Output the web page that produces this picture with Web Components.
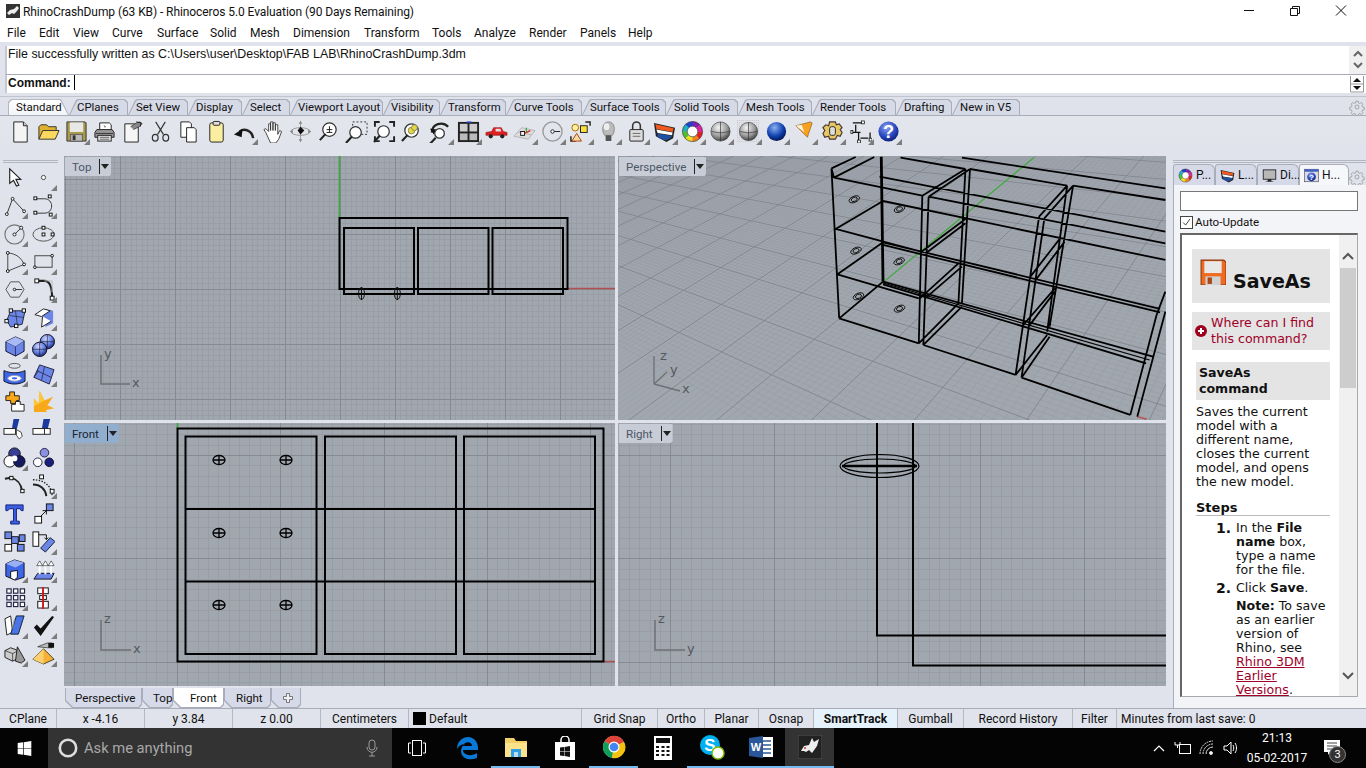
<!doctype html>
<html>
<head>
<meta charset="utf-8">
<title>Rhinoceros 5.0</title>
<style>
  html, body { margin: 0; padding: 0; background: #e0e3eb; }
  body { width: 1366px; height: 768px; overflow: hidden; display: flex; flex-direction: column; font: 12px Roboto, sans-serif; color: #111; }
</style>
</head>
<body>
<title-bar></title-bar>
<menu-bar>
  <menu-item w="32">File</menu-item><menu-item w="34">Edit</menu-item><menu-item w="39">View</menu-item><menu-item w="45">Curve</menu-item><menu-item w="53">Surface</menu-item><menu-item w="40">Solid</menu-item><menu-item w="43">Mesh</menu-item><menu-item w="71">Dimension</menu-item><menu-item w="68">Transform</menu-item><menu-item w="42">Tools</menu-item><menu-item w="55">Analyze</menu-item><menu-item w="51">Render</menu-item><menu-item w="48">Panels</menu-item><menu-item w="40">Help</menu-item>
</menu-bar>
<command-area></command-area>
<tool-tabs>
  <tool-tab w="61" active>Standard</tool-tab><tool-tab w="59">CPlanes</tool-tab><tool-tab w="60">Set View</tool-tab><tool-tab w="54">Display</tool-tab><tool-tab w="48">Select</tool-tab><tool-tab w="93">Viewport Layout</tool-tab><tool-tab w="57">Visibility</tool-tab><tool-tab w="66">Transform</tool-tab><tool-tab w="76">Curve Tools</tool-tab><tool-tab w="84">Surface Tools</tool-tab><tool-tab w="72">Solid Tools</tool-tab><tool-tab w="74">Mesh Tools</tool-tab><tool-tab w="84">Render Tools</tool-tab><tool-tab w="56">Drafting</tool-tab><tool-tab w="68">New in V5</tool-tab>
</tool-tabs>
<top-toolbar></top-toolbar>
<main-area>
  <left-toolbar slot="left"></left-toolbar>
  <view-port label="Top" view="top" box="64 156 551 264"></view-port>
  <view-port label="Perspective" view="persp" box="618 156 548 264"></view-port>
  <view-port label="Front" view="front" box="64 423 551 263" active></view-port>
  <view-port label="Right" view="right" box="618 423 548 263"></view-port>
  <view-tabs slot="tabs">
    <view-tab w="77" p="10">Perspective</view-tab><view-tab w="31" p="11">Top</view-tab><view-tab w="51" p="17" active>Front</view-tab><view-tab w="47" p="12">Right</view-tab><view-tab w="30" p="12" plus></view-tab>
  </view-tabs>
  <help-panel slot="right">
    <help-title>SaveAs</help-title>
    <help-where>Where can I find<br>this command?</help-where>
    <help-head>SaveAs<br>command</help-head>
    <help-text>Saves the current<br>model with a<br>different name,<br>closes the current<br>model, and opens<br>the new model.</help-text>
    <help-steps></help-steps>
  </help-panel>
</main-area>
<status-bar>
  <status-cell w="57">CPlane</status-cell><status-cell w="88">x -4.16</status-cell><status-cell w="88">y 3.84</status-cell><status-cell w="88">z 0.00</status-cell><status-cell w="88">Centimeters</status-cell><status-cell w="173" layer>Default</status-cell><status-cell w="76">Grid Snap</status-cell><status-cell w="47">Ortho</status-cell><status-cell w="54">Planar</status-cell><status-cell w="55">Osnap</status-cell><status-cell w="84" on>SmartTrack</status-cell><status-cell w="66">Gumball</status-cell><status-cell w="109">Record History</status-cell><status-cell w="44">Filter</status-cell><status-cell w="249" plain>Minutes from last save: 0</status-cell>
</status-bar>
<task-bar></task-bar>

<script>
const UI = 'Roboto, "Open Sans", sans-serif'

// base class: every element renders css + html into an open shadow root
class Part extends HTMLElement {
  connectedCallback() {
    if (this.shadowRoot) return
    this.attachShadow({ mode: 'open' })
    this.shadowRoot.innerHTML = `<style>${this.css()}</style>${this.html()}`
  }
  css() { return '' }
  html() { return '<slot></slot>' }
}
const def = (name, css, html) => customElements.define(name, class extends Part {
  css() { return typeof css === 'function' ? css(this) : css }
  html() { return html ? html(this) : '<slot></slot>' }
})

// colour wheel, no conic gradient in svg so it is made of arcs
const wheel = (cx, cy, r, sw) => {
  const cols = ['#e02020', '#f08020', '#f0e020', '#50c030', '#20b0c0', '#2040d0', '#8020b0', '#e020a0']
  const c = 2 * Math.PI * r, part = c / cols.length
  return cols.map((col, i) => `<circle cx="${cx}" cy="${cy}" r="${r}" fill="none" stroke="${col}" stroke-width="${sw}" stroke-dasharray="${part + .4} ${c - part - .4}" stroke-dashoffset="${-part * i}"/>`).join('')
}
const sphere = (a, b, c) => `<defs><radialGradient id="s" cx=".4" cy=".3" r=".75"><stop offset="0" stop-color="${a}"/><stop offset=".6" stop-color="${b}"/><stop offset="1" stop-color="${c}"/></radialGradient></defs>`
const lens = (x = 10, y = 10, r = 6) => `<circle cx="${x + 4}" cy="${y - 1}" r="${r}" fill="#fff" stroke="#333" stroke-width="1.3"/><path d="M${x}  ${y + 3.5}L${x - 6} ${y + 10}" stroke="#222" stroke-width="2.2"/>`
const BL = '#6c86e8'

const icons = {
  new: `<path d="M5 2h10l4 4v17H5z" fill="#f4f4f4" stroke="#222"/><path d="M15 2v4h4" fill="#ccc" stroke="#222"/>`,
  open: `<path d="M2 20V7l2-2h6l2 2h8v4" fill="#e0b030" stroke="#333"/><path d="M2 20l4-9h17l-4 9z" fill="#fbd860" stroke="#333"/>`,
  save: `<path d="M2 2h19l1 1v19H2z" fill="#a89a4c" stroke="#333"/><rect x="5" y="2.500" width="14" height="10" fill="#e8e8e8"/><rect x="6" y="15" width="12" height="7" fill="#bbb" stroke="#444" stroke-width=".7"/><rect x="8" y="16" width="3" height="5" fill="#333"/>`,
  print: `<path d="M7 10V3h10l2 2v5" fill="#fff" stroke="#222"/><path d="M11 5l3 2-2 1z" fill="#888"/><path d="M2 18v-5l2-3h16l2 3v5z" fill="#999" stroke="#222"/><path d="M3 14h18" stroke="#333"/><rect x="5" y="16" width="14" height="6" fill="#eee" stroke="#222"/><path d="M7 18h10M7 20h10" stroke="#333" stroke-width=".8"/>`,
  saveas: `<path d="M4 4h10l4 3v16H4z" fill="#f6f6f6" stroke="#222"/><path d="M10 7l6-4 4-1 2 2-3 3-6 3" fill="#888" stroke="#333" stroke-width=".8"/><path d="M16 2l5 1-1 4" fill="none" stroke="#222"/>`,
  cut: `<path d="M7 2l8 13M17 2L9 15" stroke="#333" stroke-width="1.2" fill="none"/><ellipse cx="6.500" cy="18.500" rx="3" ry="3.500" fill="none" stroke="#333" stroke-width="1.3"/><ellipse cx="17.500" cy="18.500" rx="3" ry="3.500" fill="none" stroke="#333" stroke-width="1.3"/>`,
  copy: `<path d="M4 2h9l2 2v14H4z" fill="#fff" stroke="#222"/><path d="M10 8h8l2 2v13H10z" fill="#fff" stroke="#222"/>`,
  paste: `<rect x="5" y="3" width="14" height="20" rx="2" fill="#faeea0" stroke="#222"/><rect x="8.500" y="1.500" width="7" height="4" rx="1" fill="#ddd" stroke="#222"/>`,
  undo: `<path d="M21 19C20 11 12 8 7 12" fill="none" stroke="#222" stroke-width="2.600"/><path d="M1 15l9-6-1 9z" fill="#111"/>`,
  hand: `<path d="M5 13l-2-3 2-1 3 3V4h2v7-9h2.500v9-8H15v8-6h2.500v10l2-4 2 1-3 8-3 4H10z" fill="#fff" stroke="#333" stroke-width=".9"/>`,
  orbit: `<ellipse cx="12" cy="12" rx="10" ry="4" fill="none" stroke="#999"/><path d="M12 1v22" stroke="#999"/><path d="M12 7l4 4-4 4-3-4z" fill="#111"/><path d="M12 1l-2 3h4zM12 23l-2-3h4zM1 12l3-2v4zM23 12l-3-2v4z" fill="#888"/>`,
  zoomin: lens(9, 11, 7) + `<path d="M10 10h6M13 6.500v6.500M10 13h6" stroke="#222" stroke-width="1"/>`,
  zoomwin: `<rect x="8" y="2" width="15" height="13" fill="none" stroke="#333" stroke-dasharray="2 2"/>` + lens(7, 14, 6),
  zoomext: `<path d="M2 7V2h5M17 2h5v5M22 17v5h-5M7 22H2v-5" fill="none" stroke="#222" stroke-width="2"/>` + lens(7, 13, 6),
  zoomsel: lens(7, 12, 7) + `<circle cx="11" cy="11" r="3.500" fill="#e8d840" stroke="#886"/><circle cx="14" cy="8" r="3" fill="#e8d840" stroke="#886"/>`,
  rotzoom: `<path d="M3 13C3 4 14 1 20 7" fill="none" stroke="#222" stroke-width="2.400"/><path d="M1 9l4 6 3-5z" fill="#111"/>` + lens(7, 15, 5),
  four: `<rect x="1" y="2" width="22" height="21" fill="#222"/><rect x="3" y="4" width="8" height="8" fill="#ccc"/><rect x="13" y="4" width="8" height="8" fill="#ccc"/><rect x="3" y="14" width="8" height="7" fill="#bbb"/><rect x="13" y="14" width="8" height="7" fill="#bbb"/><rect x="10" y="1.500" width="5" height="1.500" fill="#24c"/>`,
  car: `<path d="M1 16v-3l6-1 2-4h8l2 4 4 1v3z" fill="#e02020" stroke="#901010" stroke-width=".6"/><circle cx="6" cy="17" r="2.200" fill="#222"/><circle cx="18" cy="17" r="2.200" fill="#222"/><path d="M11 9h5l1 3h-6z" fill="#ddd"/>`,
  grid: `<path d="M1 17L9 8l14 3-7 9zM5 12.500l14 3M9.500 15L14 9" fill="#ddd" stroke="#aaa" stroke-width=".8"/><rect x="8" y="12" width="4" height="4" fill="#fff" stroke="#111"/><path d="M12 14l6-3" stroke="#d22" stroke-width="1.400"/><path d="M14 8v5" stroke="#2a2" stroke-width="1"/>`,
  circle: `<circle cx="12" cy="12" r="10" fill="none" stroke="#999" stroke-width="1.400"/><path d="M12 12h8" stroke="#222"/><circle cx="12" cy="12" r="1.800" fill="#fff" stroke="#222"/>`,
  pts: `<path d="M17 2h5v4M2 17v5h5" fill="none" stroke="#222" stroke-width="1.500"/><rect x="12" y="6" width="7" height="7" fill="#fbe03c" stroke="#222"/><circle cx="6.500" cy="8" r="3.500" fill="#fff0a0" stroke="#a60"/><path d="M8 14l5 8H3z" fill="#f8d8a8" stroke="#a40"/>`,
  bulb: `<path d="M8 16C4 10 6 2 12 2s8 8 4 14z" fill="#bbb" stroke="#888"/><ellipse cx="10" cy="7" rx="3" ry="3.500" fill="#eee"/><rect x="9" y="16" width="6" height="6" rx="1" fill="#555"/>`,
  lock: `<path d="M8 11V6a4 4 0 0 1 8 0v5" fill="none" stroke="#333" stroke-width="1.600"/><rect x="5" y="10" width="14" height="12" rx="1" fill="#ddd" stroke="#222"/><path d="M8 14h8M8 17h8" stroke="#666"/>`,
  layers: `<path d="M1 3l22 5-2 11-7 4L3 17z" fill="#222"/><path d="M2.500 4.500l19 4-1 4-17-3z" fill="#ee5a20"/><path d="M3.500 10l17 3-.7 3-15-2.500z" fill="#fff"/><path d="M4.500 14l15 2.500-.7 2-5.500 3-8-3z" fill="#2050a0"/>`,
  ring: wheel(12, 12, 8, 5) + `<circle cx="12" cy="12" r="10.500" fill="none" stroke="#333" stroke-width=".7"/><circle cx="12" cy="12" r="5.500" fill="#fff" stroke="#333" stroke-width=".7"/>`,
  sphere: sphere('#f4f4f4', '#999', '#333') + `<circle cx="12" cy="12" r="10" fill="url(#s)" stroke="#444" stroke-width=".7"/><path d="M2.500 12Q12 15 21.500 12M12 2v20" fill="none" stroke="#333" stroke-width=".7"/>`,
  sphere2: `<defs><pattern id="d" width="2" height="2" patternUnits="userSpaceOnUse"><rect width="1" height="1" fill="#c4c4c4"/></pattern></defs><rect width="24" height="24" fill="url(#d)"/>` + sphere('#f4f4f4', '#999', '#333') + `<circle cx="12" cy="12" r="9.500" fill="url(#s)" stroke="#444" stroke-width=".7"/><path d="M3 12Q12 15 21 12M12 2.500v19" fill="none" stroke="#333" stroke-width=".7"/>`,
  blue: sphere('#8ab0f0', '#1040b0', '#001040') + `<circle cx="12" cy="12" r="10" fill="url(#s)"/>`,
  cone: `<path d="M3 6l15-4 2 1-5 15z" fill="#f8a020" stroke="#886020" stroke-width=".7"/><path d="M3 6l6-1 3 8z" fill="#fff" opacity=".85"/>`,
  gear: `<path d="M9 2h6l1 3 3-1 3 4-2 2 2 3-2 4-3-1-2 4H9l-1-3-4 1-2-4 2-3-2-3 3-3 3 1z" fill="#e8c860" stroke="#433" stroke-width="1.200"/><rect x="9" y="7" width="6" height="9" rx="2" fill="#ddd" stroke="#222"/>`,
  dim: `<path d="M4 3h10M7 5v8M2 13h10M10 13v9M22 13v9M12 19h8" fill="none" stroke="#111" stroke-width="1.300"/><rect x="13" y="1" width="3" height="3" fill="#fff" stroke="#111" stroke-width=".8"/><rect x="9" y="21" width="3" height="3" fill="#fff" stroke="#111" stroke-width=".8"/><rect x="21" y="19" width="3" height="3" fill="#fff" stroke="#111" stroke-width=".8"/><rect x="2" y="11" width="2" height="3" fill="#fff" stroke="#111" stroke-width=".8"/>`,
  help: sphere('#8aa0f0', '#2a48c0', '#0a1a70') + `<circle cx="12" cy="12" r="10.500" fill="url(#s)"/><text x="12" y="19" text-anchor="middle" font-family="Liberation Sans" font-weight="700" font-size="19" fill="#fff">?</text>`,

  arrow: `<path d="M7 3v15l4-3 3 6 2.500-1-3-6h5z" fill="#fff" stroke="#222" stroke-width="1.200"/>`,
  point: `<circle cx="12" cy="12" r="2.200" fill="#fff" stroke="#444"/>`,
  polyline: `<path d="M4 21L10 5l12 13" fill="none" stroke="#333"/><circle cx="4" cy="21" r="1.500" fill="#fff" stroke="#222"/><circle cx="10" cy="5" r="1.500" fill="#fff" stroke="#222"/><circle cx="22" cy="18" r="1.500" fill="#fff" stroke="#222"/>`,
  curvecp: `<path d="M4 5h9c10 0 10 15 0 15H4" fill="none" stroke="#333"/><rect x="2" y="3" width="3" height="3" fill="#fff" stroke="#111"/><rect x="17" y="1" width="3" height="3" fill="#fff" stroke="#111"/><rect x="2" y="18" width="3" height="3" fill="#fff" stroke="#111"/><rect x="18" y="20" width="3" height="3" fill="#fff" stroke="#111"/>`,
  circ: `<circle cx="12" cy="13" r="10" fill="none" stroke="#777" stroke-width="1.200"/><path d="M12 13l7-7" stroke="#333"/><circle cx="12" cy="13" r="1.600" fill="#fff" stroke="#222"/><circle cx="19" cy="6" r="1.600" fill="#fff" stroke="#222"/>`,
  ellipse: `<ellipse cx="12" cy="13" rx="11" ry="7" fill="none" stroke="#555"/><rect x="10.500" y="4.500" width="3" height="3" fill="#fff" stroke="#111"/><rect x="10.500" y="11.500" width="3" height="3" fill="#fff" stroke="#111"/><rect x="20" y="11.500" width="3" height="3" fill="#fff" stroke="#111"/>`,
  arc: `<path d="M5 3c9 1 14 5 17 12L5 22z" fill="none" stroke="#444"/><circle cx="5" cy="3" r="1.500" fill="#fff" stroke="#111"/><circle cx="22" cy="15" r="1.500" fill="#fff" stroke="#111"/><circle cx="5" cy="22" r="1.500" fill="#fff" stroke="#111"/>`,
  rect: `<rect x="3" y="6" width="18" height="12" fill="none" stroke="#444"/><circle cx="21" cy="6" r="1.400" fill="#fff" stroke="#111"/><circle cx="3" cy="18" r="1.400" fill="#fff" stroke="#111"/>`,
  poly: `<path d="M8 4h9l5 8-5 8H8l-5-8z" fill="none" stroke="#555"/><path d="M12 12h8" stroke="#333"/><circle cx="12" cy="12" r="1.300" fill="#fff" stroke="#111"/>`,
  fillet: `<path d="M5 3h8c5 0 8 4 8 18" fill="none" stroke="#222" stroke-width="2.200"/><path d="M13 3h8v12" fill="none" stroke="#bbb"/><rect x="3" y="1" width="4" height="4" fill="#fff" stroke="#111"/><rect x="19" y="19" width="4" height="4" fill="#fff" stroke="#111"/>`,
  srfpts: `<path d="M8 5h15l-3 14-12 3-4-7z" fill="${BL}" stroke="#223"/><path d="M7 10l15 2M13 5l2 15" stroke="#223" stroke-width=".7"/><rect x="6.500" y="3" width="3.500" height="3.500" fill="#fff" stroke="#111"/><rect x="20" y="3" width="3.500" height="3.500" fill="#fff" stroke="#111"/><rect x="2" y="14" width="3.500" height="3.500" fill="#fff" stroke="#111"/><rect x="12" y="19" width="3.500" height="3.500" fill="#fff" stroke="#111"/>`,
  srfedge: `<path d="M6 8l8-5 8 2v13l-8 4v-9z" fill="${BL}"/><path d="M3 9l9-6 7 2-9 6z" fill="#fff" stroke="#222"/><path d="M11 11l-1 11 10-6" fill="#fff" stroke="#222"/>`,
  cube: `<path d="M3 8l10-5 9 4v11l-9 5-10-5z" fill="${BL}" stroke="#113"/><path d="M3 8l10 5 9-6M13 13v10" fill="none" stroke="#113" stroke-width=".7"/><path d="M3 8l10-5 9 4-9 6z" fill="#a9b9f4"/>`,
  spheres: sphere('#cfd8fb', '#5c78e0', '#142060') + `<circle cx="16" cy="8" r="7.500" fill="url(#s)" stroke="#112"/><circle cx="8" cy="16" r="7.500" fill="url(#s)" stroke="#112"/><path d="M1 16h14M8 9v14M9 8h14M16 1v14" stroke="#112" stroke-width=".6"/>`,
  band: `<ellipse cx="12" cy="4" rx="6" ry="2.500" fill="none" stroke="#555"/><path d="M1 9c7 3 15 3 22 0v11c-7 4-15 4-22 0z" fill="#3a66e8" stroke="#112"/><ellipse cx="12" cy="17" rx="7" ry="3" fill="#fff" stroke="#99b"/><ellipse cx="12" cy="17" rx="3" ry="1.200" fill="#3a66e8"/>`,
  meshs: `<path d="M8 3l15 5-5 15L2 16z" fill="${BL}" stroke="#224"/><path d="M5 9l15 7M13 5l-3 14M2 16l5-7" stroke="#224" stroke-width=".8"/>`,
  join: `<path d="M3 6h4V2h5v4h5v5h-3v3H8v-3H3z" fill="#f8a818" stroke="#222"/><path d="M9 15h4v-3h5v3h4v7H9z" fill="#fff" stroke="#222"/>`,
  explode: `<path d="M2 23V9l5 5 1-13 5 10 9-4-6 9 7 3-9 2 2 2z" fill="#f8a818"/><path d="M2 17V9l5 5 1-13 5 10" fill="#fbc838"/>`,
  trim: `<path d="M11 1h6l-3 12h-5z" fill="#1a3aa0"/><rect x="1" y="11" width="12" height="6" fill="#fff" stroke="#222"/><path d="M14 12l5 3 1 4-3 3-3-4z" fill="#fff" stroke="#444"/>`,
  split: `<path d="M12 1h7l-3 12h-6z" fill="#1a3aa0"/><rect x="1" y="11" width="18" height="6" fill="#fff" stroke="#222"/><path d="M13 11v6" stroke="#222"/>`,
  group: `<circle cx="12" cy="8" r="6" fill="#3a3f96" stroke="#111"/><circle cx="7" cy="16" r="6" fill="#fff" stroke="#111"/><circle cx="17" cy="16" r="6" fill="#151a60" stroke="#111"/><circle cx="12" cy="13" r="3" fill="#fff"/>`,
  ungroup: `<circle cx="13" cy="7" r="4.500" fill="#8a8fe0" stroke="#224"/><circle cx="6" cy="17" r="4.500" fill="#fff" stroke="#224"/><circle cx="18" cy="17" r="4.500" fill="#1a2080" stroke="#112"/>`,
  fil2: `<path d="M2 5l6-1c6 1 11 6 12 14" fill="none" stroke="#222" stroke-width="2"/><rect x="7" y="2.500" width="3.500" height="3.500" fill="#fff" stroke="#111"/><rect x="18.500" y="16" width="3.500" height="3.500" fill="#fff" stroke="#111"/>`,
  offset: `<path d="M1 6c10 0 19 5 20 16" fill="none" stroke="#222" stroke-dasharray="1.500 1.500" stroke-width="1.400"/><path d="M1 11c8 0 13 5 14 12" fill="none" stroke="#222" stroke-width="2"/><rect x="8" y="1" width="4" height="4" fill="#fff" stroke="#111"/><rect x="19" y="16" width="4" height="4" fill="#fff" stroke="#111"/>`,
  text3: `<path d="M3 3h18v6h-2l-1-2h-4v13h3v3H8v-3h3V7H7L5 9H3z" fill="#3c5ee0" stroke="#102080"/>`,
  move: `<rect x="3" y="15" width="7" height="7" fill="#fff" stroke="#111"/><rect x="15" y="2" width="7" height="7" fill="${BL}" stroke="#111"/><path d="M9 15l6-6M11 9h4v4" fill="none" stroke="#111"/>`,
  squares: `<rect x="2" y="2" width="7" height="7" fill="${BL}" stroke="#111"/><rect x="9" y="7" width="7" height="7" fill="${BL}" stroke="#111"/><rect x="17" y="5" width="6" height="7" fill="${BL}" stroke="#111"/><rect x="2" y="15" width="7" height="7" fill="#fff" stroke="#111"/><rect x="15" y="15" width="7" height="7" fill="${BL}" stroke="#111"/>`,
  rotate: `<rect x="1" y="2" width="6" height="15" fill="#fff" stroke="#111"/><path d="M19 8l5 4-10 11-5-4z" fill="${BL}" stroke="#123"/><path d="M7 5h8v5M13 8l2 2 2-2" fill="none" stroke="#111"/>`,
  box: `<path d="M3 6l9-4 10 3v15l-9 3-10-4z" fill="#3f68e8" stroke="#112"/><path d="M3 6l10 4 9-5-10-3z" fill="#9ab0f2"/><path d="M8 14l7-1v7l-3 3-4-2z" fill="#fff" stroke="#111"/>`,
  arrows: `<path d="M2 22l4-6h17l-3 6z" fill="${BL}" stroke="#112"/><path d="M8 5v12M14 5v12M20 5v12" stroke="#fff" stroke-width="2"/><path d="M8 3l-3 5h6zM14 3l-3 5h6zM20 3l-3 5h6z" fill="#fff" stroke="#333" stroke-width=".7"/>`,
  array: [4, 11, 18].flatMap(x => [3, 10, 17].map(y => `<rect x="${x}" y="${y}" width="4.500" height="4.500" fill="#fff" stroke="#224" stroke-width="1.200"/>`)).join(''),
  mirror: `<rect x="6" y="2" width="11" height="6" fill="#fff" stroke="#111"/><rect x="8" y="10" width="7" height="4" fill="#fff" stroke="#111"/><rect x="6" y="16" width="11" height="7" fill="#fff" stroke="#111"/><path d="M11.500 1v23" stroke="#d01818" stroke-width="2"/>`,
  panels: `<path d="M2 5l6-3 2 17-6 3z" fill="#fff" stroke="#222"/><path d="M14 2h8l-6 19H8z" fill="#4a74e8" stroke="#123"/><path d="M12 5l-2 10" stroke="#999"/>`,
  check: `<path d="M2 14l3-3 4 4L21 2l2 1L9 23z" fill="#111"/>`,
  shapes: `<path d="M2 9l6-3 8 3v8l-6 3-8-4z" fill="#ccc" stroke="#222"/><path d="M2 9l8 3 6-3M10 12v8" fill="none" stroke="#222" stroke-width=".7"/><path d="M15 5l8 14-4 3-6-2z" fill="#999" stroke="#222"/>`,
  pyramid: `<path d="M12 7l11 11-11 5-11-5z" fill="#f8b038" stroke="#442"/><path d="M12 7v16L1 18z" fill="#fad070"/><path d="M6 5l10-4h5v5h-5z" fill="#bbb" stroke="#222" stroke-width=".7"/><rect x="17" y="1" width="6" height="5" fill="#111"/>`,
  // small ones used on the panel tabs
  monitor: `<rect x="2" y="3" width="20" height="15" fill="#b8b8b8" stroke="#222" stroke-width="1.400"/><path d="M9 18h6v3h3v1H6v-1h3z" fill="#222"/>`,
  helpwin: `<rect x="1" y="2" width="22" height="20" fill="#ddd" stroke="#446"/><rect x="1" y="2" width="22" height="4" fill="#4060c0"/>` + sphere('#8aa0f0', '#2a48c0', '#0a1a70') + `<circle cx="12" cy="14" r="7" fill="url(#s)"/><text x="12" y="19" text-anchor="middle" font-family="Liberation Sans" font-weight="700" font-size="13" fill="#fff">?</text>`,
  floppy: `<path d="M1 1h21l2 2v21H1z" fill="#f06a20" stroke="#8a3a10"/><rect x="4" y="2" width="16" height="11" fill="#e8e8e8"/><rect x="5" y="16" width="14" height="8" fill="#d0d0d0"/><rect x="7" y="17" width="4" height="6" fill="#a84818"/>`,
  gearline: `<circle cx="12" cy="12" r="3" fill="none" stroke="#888"/><path d="M10 2h4l.5 3 2.500 1 2.500-1.700 2.800 2.800-1.800 2.400 1 2.500 3 .5v4l-3 .5-1 2.500 1.800 2.400-2.800 2.800-2.500-1.700-2.500 1-.5 3h-4l-.5-3-2.500-1-2.500 1.700-2.800-2.800 1.800-2.400-1-2.500-3-.5v-4l3-.5 1-2.500-1.800-2.400 2.800-2.800L7 6l2.500-1z" transform="translate(1.500 1.500) scale(.875)" fill="none" stroke="#888" stroke-width="1.100"/>`
}
const svg = (name, size = 24) => `<svg width="${size}" height="${size}" viewBox="0 0 24 24" style="display:block">${icons[name]}</svg>`

// ---- chrome
def('title-bar', `:host{display:flex;height:22px;box-sizing:border-box;padding-top:1px;background:#fff;align-items:center;font:12px ${UI}}
  .t{margin-left:3px;letter-spacing:-.08px}.l{margin-left:6px;margin-top:-1px}
  .ctl{margin-left:auto;display:flex;padding-right:2px;margin-top:-2px}.ctl svg{width:46px;height:21px;display:block}`, () => `
  <svg class="l" width="14" height="14" viewBox="0 0 14 14"><rect width="14" height="14" fill="#333"/><path d="M1 9l3-3 4-1 3-3 2 2-2 3-3 3-2-1-3 2z" fill="#eee"/></svg>
  <span class="t">RhinoCrashDump (63 KB) - Rhinoceros 5.0 Evaluation (90 Days Remaining)</span>
  <span class="ctl">
   <svg viewBox="0 0 46 21"><path d="M18 10.500h10" stroke="#111"/></svg>
   <svg viewBox="0 0 46 21"><path d="M18.500 8.500h7v7h-7zM20.500 8.500v-2h7v7h-2" fill="none" stroke="#111"/></svg>
   <svg viewBox="0 0 46 21"><path d="M18 5.500l10 10M28 5.500l-10 10" stroke="#111"/></svg>
  </span>`)
def('menu-bar', `:host{display:flex;height:20px;box-sizing:border-box;padding:2px 0 0 7px;background:#fff;align-items:center;font:12px ${UI}}`)
def('menu-item', t => `:host{display:block;width:${t.getAttribute('w')}px;white-space:nowrap}`)
def('command-area', `:host{display:block;height:47px;padding:4px 0 3px 5px;background:#e0e3eb;font:12.400px "Liberation Sans",sans-serif}
  .row{display:flex;background:#fff;border-left:2px solid #c4c8d2}
  .hist{height:28px;border-bottom:1px solid #a6abb6}.cmd{height:18px}
  .tx{flex:1;padding:1px;white-space:nowrap}.cmd .tx{font-weight:700;font-size:12px;padding-top:0}
  .cur{display:inline-block;width:1px;height:15px;background:#000;margin-left:3px;vertical-align:-3px}
  .bt{width:17px;background:#f0f0f0;display:flex;flex-direction:column;align-items:center;justify-content:space-between}`, () => `
  <div class="row hist"><div class="tx">File successfully written as C:\\Users\\user\\Desktop\\FAB LAB\\RhinoCrashDump.3dm</div>
   <div class="bt"><svg width="10" height="14" viewBox="0 0 10 14"><path d="M1 10l4-4 4 4" fill="none" stroke="#666" stroke-width="2"/></svg><svg width="10" height="14" viewBox="0 0 10 14"><path d="M1 3l4 4 4-4" fill="none" stroke="#666" stroke-width="2"/></svg></div></div>
  <div class="row cmd"><div class="tx">Command:<span class="cur"></span></div>
   <div class="bt" style="background:#fff"><svg width="15" height="18" viewBox="0 0 15 18"><path d="M.5 1v16h13V1M.5 9h13" fill="none" stroke="#999"/><path d="M7 3l4 4H3zM3 11h8l-4 4z" fill="#111"/></svg></div></div>`)
def('tool-tabs', `:host{display:flex;height:20px;padding-left:8px;background:#dfe2ea;border-top:1px solid #c0c4cc;border-bottom:1px solid #a9adb7;position:relative;box-sizing:border-box;font:11.400px ${UI};align-items:flex-end}
  svg{position:absolute;right:1px;top:2px}`, () => `<slot></slot>${svg('gearline', 16)}`)
const slant = 'polygon(0 100%,7px 1px,9px 0,calc(100% - 3px) 0,100% 3px,100% 100%)'
def('tool-tab', t => {
  const on = t.hasAttribute('active')
  return `:host{display:block;position:relative;box-sizing:border-box;width:${t.getAttribute('w')}px;height:16px;line-height:17px;padding-left:8px;white-space:nowrap;
    background:${on ? '#b4b8c6' : '#a9adbb'};clip-path:${on ? 'polygon(0 100%,0 3px,3px 0,calc(100% - 8px) 0,100% 100%)' : slant}}
  :host::before{content:"";position:absolute;inset:1px 1px 0 1px;background:${on ? 'linear-gradient(#fff,#f3f4f8)' : '#d6d9e6'};clip-path:${on ? 'polygon(0 100%,0 3px,3px 0,calc(100% - 8px) 0,100% 100%)' : slant}}
  span{position:relative}`
}, () => `<span><slot></slot></span>`)
def('tool-icon', t => `:host{display:flex;width:28px;height:28px;align-items:center;justify-content:center;position:relative}
  ${t.hasAttribute('fly') ? `:host::after{content:"";position:absolute;right:0;bottom:0;width:6px;height:6px;background:#7c7c7c;clip-path:polygon(100% 0,100% 100%,0 100%)}` : ''}`,
  t => svg(t.getAttribute('name'), 23))

const mk = (list) => list.map(s => { const f = s.endsWith('*'); return `<tool-icon name="${s.replace('*', '')}"${f ? ' fly' : ''}></tool-icon>` }).join('')
def('top-toolbar', `:host{display:flex;height:34px;padding:1px 0 0 6px;box-sizing:border-box;background:linear-gradient(#e4e6ed,#e0e3eb)}`, () =>
  mk(['new', 'open', 'save*', 'print', 'saveas', 'cut', 'copy', 'paste', 'undo*', 'hand', 'orbit', 'zoomin', 'zoomwin', 'zoomext', 'zoomsel', 'rotzoom*', 'four*', 'car', 'grid*', 'circle*', 'pts*', 'bulb*', 'lock*', 'layers*', 'ring*', 'sphere*', 'sphere2*', 'blue*', 'cone*', 'gear*', 'dim*', 'help*']))
def('left-toolbar', `:host{display:block;width:64px;background:#e0e3eb}
  .grip{height:1px;margin:10px 6px 0 3px;border-top:1px solid #b2b6c0;border-bottom:1px solid #b2b6c0}
  .g{display:grid;grid-template-columns:29px 29px;grid-auto-rows:28px}`, () => `<div class="grip"></div><div class="g">` +
  mk(['arrow', 'point*', 'polyline*', 'curvecp*', 'circ*', 'ellipse*', 'arc*', 'rect*', 'poly*', 'fillet*', 'srfpts*', 'srfedge*', 'cube*', 'spheres*', 'band*', 'meshs*', 'join', 'explode', 'trim', 'split', 'group*', 'ungroup', 'fil2', 'offset*', 'text3', 'move*', 'squares', 'rotate*', 'box*', 'arrows*', 'array*', 'mirror*', 'panels*', 'check*', 'shapes*', 'pyramid*']) + `</div>`)

// ---- the four views, drawn in page coordinates through the svg viewBox
const MINOR = '#999ea6', MAJOR = '#868b93'
const flatGrid = (x, y, w, h, ox, oy, major, n) => {
  let a = '', b = ''
  const step = major / n
  const line = (k, d) => { if (k % n === 0) b += d; else a += d }
  for (let k = Math.ceil((x - ox) / step); ox + k * step < x + w; k++) { const v = Math.round(ox + k * step) + .5; line(k, `M${v} ${y}V${y + h}`) }
  for (let k = Math.ceil((y - oy) / step); oy + k * step < y + h; k++) { const v = Math.round(oy + k * step) + .5; line(k, `M${x} ${v}H${x + w}`) }
  return `<path d="${a}" stroke="${MINOR}" fill="none"/><path d="${b}" stroke="${MAJOR}" fill="none"/>`
}
const axes = (ox, oy, tx, ty, a, b) => `<path d="M${ox} ${ty}V${oy}H${tx}" fill="none" stroke="#6d7076" stroke-width="1.500"/>
  <text x="${ox + 3}" y="${ty + 3}" class="ax">${a}</text><text x="${tx + 2}" y="${oy + 3}" class="ax">${b}</text>`

const perspGrid = () => {
  // ground plane as a homography, fitted on the vanishing points of the model edges (zoom coords)
  const O = [755, 378], Vx = [-1372, -207], Vy = [2279, -948], al = -.0706, be = .0583
  const P = (X, Y) => { const w = 1 + X * al + Y * be; return [(O[0] + X * al * Vx[0] + Y * be * Vy[0]) / w, (O[1] + X * al * Vx[1] + Y * be * Vy[1]) / w] }
  const seg = (a, b) => { const p = P(a[0], a[1]), q = P(b[0], b[1]); return `M${p[0].toFixed(1)} ${p[1].toFixed(1)}L${q[0].toFixed(1)} ${q[1].toFixed(1)}` }
  let mi = '', ma = ''
  for (let k = -160; k <= 110; k++) {
    const v = k / 10, d = seg([v, -11], [v, 16])
    if (k % 10 === 0) ma += d; else mi += d
  }
  for (let k = -110; k <= 160; k++) {
    const v = k / 10, d = seg([-16, v], [11, v])
    if (k % 10 === 0) ma += d; else mi += d
  }
  return `<g transform="translate(620 155) scale(.3507 .3333)"><path d="${mi}" stroke="#8b9199" stroke-opacity=".28" fill="none" vector-effect="non-scaling-stroke"/><path d="${ma}" stroke="#7d8289" stroke-opacity=".8" fill="none" vector-effect="non-scaling-stroke"/></g>`
}

const L = (...n) => { let d = ''; for (let i = 0; i < n.length; i += 4) d += `M${n[i]} ${n[i + 1]}L${n[i + 2]} ${n[i + 3]}`; return d }
const persp3d = `<path d="M654 383.700V356M654 384L680 391M654 384L667 372" fill="none" stroke="#6d7076" stroke-width="1.300"/>
   <text x="660" y="360" class="ax">z</text><text x="670" y="374" class="ax">y</text><text x="682" y="393" class="ax">x</text>`
const views = {
  top: () => flatGrid(64, 156, 551, 264, 339.5, 288.5, 55, 10) + axes(101, 384, 130, 355, 'y', 'x') +
    `<path d="M339.500 156V218" stroke="#4ca24c" stroke-width="2"/><path d="M567 288.500H615" stroke="#b05050" stroke-width="1.500"/>
     <g fill="none" stroke="#000" stroke-width="2"><rect x="339.500" y="218" width="228" height="71"/>
     <rect x="344" y="228" width="70" height="66"/><rect x="418" y="228" width="70.500" height="66"/><rect x="492.500" y="228" width="70.500" height="66"/><path d="M344 289h219"/></g>
     <g fill="none" stroke="#111"><ellipse cx="361.500" cy="293.500" rx="3" ry="6"/><ellipse cx="397.300" cy="293.500" rx="3" ry="6"/><path d="M361.500 287v13M397.300 287v13"/></g>`,
  persp: () => perspGrid() + persp3d + `<g transform="translate(620 155) scale(.3507 .3333)" fill="none"><path vector-effect="non-scaling-stroke" d="M755 378L1180 8" stroke="#4ea84e" stroke-width="1.500"/><path vector-effect="non-scaling-stroke" d="M1475 785L1502 793" stroke="#b85050" stroke-width="1.500"/>
    <path vector-effect="non-scaling-stroke" stroke="#000" stroke-width="1.800" d="${L(
      603, 40, 625, 490, 603, 40, 610, 68, 603, 40, 672, 6, 610, 68, 725, 6, 610, 68, 862, 122, 800, 8, 985, 42, 985, 42, 862, 122, 998, 42, 880, 125,
      862, 122, 852, 565, 880, 125, 865, 570, 985, 42, 965, 445, 998, 42, 975, 445, 625, 490, 852, 565, 625, 490, 750, 380,
      615, 222, 750, 138, 615, 222, 858, 290, 620, 358, 750, 262, 620, 358, 852, 430, 860, 290, 985, 192, 872, 295, 985, 205, 855, 430, 965, 325, 870, 430, 975, 335,
      750, 138, 1555, 315, 740, 65, 1555, 230, 880, 125, 1555, 265, 975, 8, 1555, 100, 998, 42, 1275, 92, 1292, 92, 1555, 135,
      750, 262, 1540, 462, 750, 270, 1540, 472, 750, 380, 1520, 605, 750, 388, 1500, 625,
      1195, 185, 1128, 660, 1210, 190, 1145, 668, 1275, 92, 1218, 530, 1292, 92, 1225, 515, 1195, 185, 1275, 92, 1210, 190, 1292, 92,
      1170, 365, 1255, 250, 1185, 375, 1268, 260, 1150, 510, 1240, 400, 1165, 515, 1240, 410, 1128, 660, 1218, 540, 1145, 668, 1225, 545,
      852, 565, 965, 445, 865, 570, 975, 455, 865, 570, 1128, 660, 1145, 668, 1455, 780, 1455, 780, 1530, 480, 1530, 480, 1555, 410, 1475, 785, 1555, 470
    )}"/>
    <path vector-effect="non-scaling-stroke" stroke="#000" stroke-width="2.800" d="M745 5L750 380"/>
    <path vector-effect="non-scaling-stroke" stroke="#000" stroke-width="1.200" d="M750 384L1510 615"/>
    <g stroke="#111" stroke-width="1">${[[668, 133], [797, 162], [673, 287], [796, 319], [680, 424], [797, 461]].map(p => `<ellipse vector-effect="non-scaling-stroke" cx="${p[0]}" cy="${p[1]}" rx="16" ry="9" transform="rotate(-25 ${p[0]} ${p[1]})"/><ellipse vector-effect="non-scaling-stroke" cx="${p[0]}" cy="${p[1]}" rx="9" ry="6" transform="rotate(-25 ${p[0]} ${p[1]})"/>`).join('')}</g></g>`,
  front: () => flatGrid(64, 423, 551, 263, 177, 661.5, 103.3, 10) + axes(101, 650, 131, 620, 'z', 'x') +
    `<path d="M177.500 423v5" stroke="#4ca24c" stroke-width="2"/><path d="M604 661.500H615" stroke="#b05050" stroke-width="1.500"/>
     <g fill="none" stroke="#000" stroke-width="2"><rect x="177.500" y="428.500" width="426" height="233"/>
     <rect x="185.500" y="436.500" width="131" height="217.500"/><rect x="325" y="436.500" width="131" height="217.500"/><rect x="464" y="436.500" width="131" height="217.500"/>
     <path d="M185.500 509H595M185.500 581.500H595"/></g>
     <g fill="none" stroke="#000" stroke-width="1.300">${[460, 533, 605].flatMap(y => [219, 286].map(x => `<ellipse cx="${x}" cy="${y}" rx="6" ry="4.500"/><path d="M${x - 6} ${y}h12M${x} ${y - 5}v10"/>`)).join('')}</g>`,
  right: () => flatGrid(618, 423, 548, 263, 877, 661.5, 103.3, 10) + axes(655, 650, 685, 620, 'z', 'y') +
    `<g fill="none" stroke="#000" stroke-width="2"><path d="M877 423V635.500H1166M913 423V665.500H1166"/></g>
     <g fill="none" stroke="#000" stroke-width="1.200"><ellipse cx="879.500" cy="466" rx="39.500" ry="11.500"/><ellipse cx="879.500" cy="466" rx="36" ry="7"/></g><path d="M842 466H917" stroke="#000" stroke-width="2.400"/>`
}
def('view-port', t => {
  const b = t.getAttribute('box').split(' ')
  const a = t.hasAttribute('active')
  return `:host{display:block;position:relative;overflow:hidden;background:#a1a7af}
  svg{display:block;width:${b[2]}px;height:${b[3]}px}
  .ax{font:13px "DejaVu Sans",sans-serif;fill:#55585e}
  .tag{position:absolute;left:1px;top:1px;height:19px;display:flex;align-items:center;padding:0 2px 0 7px;font:11.600px ${UI};
    color:${a ? '#1a2430' : '#4c5766'};background:${a ? '#92aecf' : '#c8ccd6'};clip-path:polygon(0 0,100% 0,100% calc(100% - 2px),calc(100% - 2px) 100%,0 100%)}
  .tag i{display:block;width:1px;height:15px;background:#222;margin:0 1px 0 8px}
  .tag b{display:block;width:0;height:0;border:4px solid transparent;border-top:5px solid #222;border-bottom:0}`
}, t => `<svg viewBox="${t.getAttribute('box')}" xmlns="http://www.w3.org/2000/svg">${views[t.getAttribute('view')]()}</svg>
  <div class="tag">${t.getAttribute('label')}<i></i><b></b></div>`)

def('main-area', `:host{display:flex;height:558px;background:#e0e3eb}
  .mid{width:1102px;display:flex;flex-direction:column;padding-top:6px;box-sizing:border-box}
  .views{display:grid;grid-template-columns:551px 548px;grid-template-rows:264px 263px;gap:3px}`, () => `<slot name="left"></slot>
  <div class="mid"><div class="views"><slot></slot></div><slot name="tabs"></slot></div><slot name="right"></slot>`)
def('view-tabs', `:host{display:flex;margin-top:1px;padding:1px 0 0 1px;font:11.600px ${UI};height:21px;box-sizing:border-box}`)
const vtab = 'polygon(0 0,100% 0,100% calc(100% - 3px),calc(100% - 3px) 100%,7px 100%,0 calc(100% - 7px))'
def('view-tab', t => `:host{display:block;position:relative;box-sizing:border-box;width:${t.getAttribute('w')}px;height:20px;line-height:20px;padding-left:${t.getAttribute('p')}px;white-space:nowrap;
  background:#a9adbb;clip-path:${vtab}}
  :host::before{content:"";position:absolute;inset:0 1px 1px 1px;background:${t.hasAttribute('active') ? '#fff' : '#d6d9e8'};clip-path:${vtab}}
  span{position:relative}svg{position:relative;display:block;margin-top:5px}`, t => t.hasAttribute('plus')
  ? `<svg width="10" height="10" viewBox="0 0 10 10"><path d="M3.500.5h3v3h3v3h-3v3h-3v-3h-3v-3h3z" fill="#f0f0f4" stroke="#777"/></svg>` : `<span><slot></slot></span>`)

// ---- help panel
def('help-panel', `:host{display:block;width:200px;padding-left:7px;box-sizing:border-box;font:12.600px "DejaVu Sans",Verdana,sans-serif}
  .grip{margin:10px 0 1px;height:1px;border-top:1px solid #b2b6c0;border-bottom:1px solid #b2b6c0}
  .tabs{display:flex;height:21px;position:relative;font:12px ${UI}}
  .tabs svg{flex:none}
  .pt{width:42px;height:21px;box-sizing:border-box;display:flex;align-items:center;gap:3px;padding-left:4px;background:#d6d9e8;border:1px solid #a9adb7;border-bottom:0;border-radius:3px 6px 0 0}
  .pt.on{background:#f6f7fa;width:50px}
  .gear{position:absolute;right:1px;top:5px}
  .body{height:523px;background:#f3f4f7;border-left:1px solid #a9adb7;padding:6px 8px 0 6px;box-sizing:border-box}
  .inp{height:20px;box-sizing:border-box;border:1px solid #777;background:#fff}
  .au{display:flex;align-items:center;gap:2px;height:22px;font:11.600px ${UI}}
  .cb{width:13px;height:13px;box-sizing:border-box;border:1px solid #444;background:#fff;display:block}
  .frame{height:464px;box-sizing:border-box;background:#fff;border:1px solid #aaa;border-left:2px solid #666;border-top:2px solid #666;display:flex;overflow:hidden}
  .page{flex:1;padding:14px 9px 0 10px;line-height:14px;overflow:hidden;color:#111}
  .sb{width:18px;background:#f0f0f0;position:relative}
  .sb .th{position:absolute;left:1px;right:1px;top:33px;height:120px;background:#cdcdcd}
  .sb svg{position:absolute;left:3px}`, () => `
  <div class="grip"></div>
  <div class="tabs">
   <div class="pt">${svg('ring', 15)}P...</div><div class="pt">${svg('layers', 15)}L...</div><div class="pt">${svg('monitor', 15)}Di...</div><div class="pt on">${svg('helpwin', 15)}H...</div>
   <span class="gear">${svg('gearline', 16)}</span>
  </div>
  <div class="body">
   <div class="inp"></div>
   <div class="au"><svg class="cb" viewBox="0 0 13 13"><path d="M2.500 6.500l3 3 5-7" fill="none" stroke="#222"/></svg>Auto-Update</div>
   <div class="frame">
    <div class="page"><slot></slot></div>
    <div class="sb"><svg width="12" height="10" viewBox="0 0 12 10" style="top:17px"><path d="M1 7l5-5 5 5" fill="none" stroke="#555" stroke-width="2"/></svg><div class="th"></div>
    <svg width="12" height="10" viewBox="0 0 12 10" style="top:435px"><path d="M1 3l5 5 5-5" fill="none" stroke="#555" stroke-width="2"/></svg></div>
   </div>
  </div>`)
def('help-title', `:host{display:flex;align-items:flex-end;height:54px;box-sizing:border-box;background:#e4e4e4;padding:0 0 13px 8px;gap:7px;font:700 19px "DejaVu Sans",sans-serif}
  span{line-height:20px;position:relative;top:1px}svg{position:relative;top:-5px}`, () => `${svg('floppy', 26)}<span><slot></slot></span>`)
def('help-where', `:host{display:flex;align-items:center;height:38px;background:#e4e4e4;margin-top:9px;padding-left:3px;gap:4px;color:#a00028;line-height:16px}
  svg{flex:none}`, () => `<svg width="12" height="12" viewBox="0 0 12 12"><circle cx="6" cy="6" r="6" fill="#a00020"/><path d="M3 6h6M6 3v6" stroke="#fff" stroke-width="2"/></svg><span><slot></slot></span>`)
def('help-head', `:host{display:block;margin:12px 0 5px 4px;padding:3px 0 3px 3px;background:#e4e4e4;font-weight:700;line-height:16px;height:32px}`)
def('help-text', `:host{display:block;margin-left:4px;line-height:14px;white-space:nowrap}`)
def('help-steps', `:host{display:block;margin-left:4px;line-height:14px;white-space:nowrap}
  h4{margin:12px 0 5px;font-size:13px;line-height:14px;border-bottom:1px solid #bbb;height:14px}
  ol{list-style:none;margin:0;padding:0 0 0 20px}li{display:grid;grid-template-columns:20px auto;margin-bottom:4px}
  li>b:first-child{font-size:14px}
  p{margin:4px 0 0}a{color:#a00028;text-decoration:underline}`, () => `<h4>Steps</h4><ol>
  <li><b>1.</b><div>In the <b>File</b><br><b>name</b> box,<br>type a name<br>for the file.</div></li>
  <li><b>2.</b><div>Click <b>Save</b>.<p><b>Note:</b> To save<br>as an earlier<br>version of<br>Rhino, see<br><a>Rhino 3DM</a><br><a>Earlier</a><br><a>Versions</a>.</p></div></li></ol>`)

// ---- bottom
def('status-bar', `:host{display:flex;height:20px;box-sizing:border-box;border-top:1px solid #a8acb6;background:#e0e3eb;font:12px ${UI}}`)
def('status-cell', t => `:host{display:flex;align-items:center;box-sizing:border-box;width:${t.getAttribute('w')}px;height:19px;border-right:1px solid #b4b8c2;white-space:nowrap;
  ${t.hasAttribute('plain') || t.hasAttribute('layer') ? 'padding-left:4px;' + (t.hasAttribute('plain') ? 'border-right:0;' : '') : 'justify-content:center;'}
  ${t.hasAttribute('on') ? 'background:#e5f1fb;font-weight:700;' : ''}}
  i{display:block;width:13px;height:13px;background:#000;margin-right:3px}`, t => `${t.hasAttribute('layer') ? '<i></i>' : ''}<slot></slot>`)

const WIN = `<path d="M0 3l8-1v8.500H0zM9 1.900L20 0v10.500H9zM0 11.500h8V20l-8-1zM9 11.500h11V22L9 20.200z"`
def('task-bar', `:host{display:block;height:40px;background:#040404;color:#fff;font:12px ${UI}}
  .b{display:grid;grid-template-columns:48px 344px auto 1fr auto;height:40px;align-items:center}
  .st{display:flex;justify-content:center}
  .se{height:40px;background:#333;display:flex;align-items:center;padding-left:10px;color:#a8a8a8;font-size:14.700px;gap:6px}
  .se .mic{margin-left:auto;margin-right:14px}
  .apps{display:flex;height:40px}
  .ap{width:49px;height:40px;display:flex;align-items:center;justify-content:center;box-sizing:border-box}
  .ap.first{width:50px}
  .ap.o{border-bottom:2px solid #76b9ed}.ap.a{background:#333}
  .tr{display:flex;align-items:center;height:40px;padding-right:13px}
  .ck{width:68px;text-align:center;line-height:20px;font-size:12px}
  .nt{position:relative;width:42px;height:40px;display:flex;align-items:center;justify-content:center}
  .bd{position:absolute;left:18px;top:18px;width:17px;height:17px;border-radius:50%;background:#333;border:1px solid #888;box-sizing:border-box;text-align:center;line-height:15px;font-size:11px}
  .tr svg{display:block}.tr .w{width:24px;display:flex;justify-content:center}`, () => `<div class="b">
   <div class="st"><svg width="15" height="15" viewBox="0 0 20 22" fill="#fff">${WIN}/></svg></div>
   <div class="se"><svg width="20" height="20" viewBox="0 0 20 20"><circle cx="10" cy="10" r="8.200" fill="none" stroke="#ddd" stroke-width="2.600"/></svg>Ask me anything
     <svg class="mic" width="12" height="18" viewBox="0 0 12 18" fill="none" stroke="#999"><rect x="3" y="1" width="6" height="10" rx="3"/><path d="M1 8c0 7 10 7 10 0M6 13v4M3 17h6"/></svg></div>
   <div class="apps">
    <div class="ap first"><svg width="18" height="16" viewBox="0 0 18 16" fill="none" stroke="#fff"><rect x="4.500" y=".500" width="9" height="15"/><path d="M3 3H.500v10H3M15 3h2.500v10H15"/></svg></div>
    <div class="ap"><svg width="24" height="24" viewBox="0 0 24 24"><path d="M2 13C2 5 8 1 13 1c6 0 10 5 10 11v2H8c0 5 8 7 14 3v5c-7 3-16 1-16-7 0-3 2-6 4-7-4 0-7 3-8 5zM8 10h9c0-5-8-5-9 0z" fill="#0a78d7"/></svg></div>
    <div class="ap o"><svg width="24" height="22" viewBox="0 0 24 22"><path d="M1 2h9l2 3h11v16H1z" fill="#f3d066"/><path d="M1 7h22v14H1z" fill="#fce28a"/><path d="M7 13h10v8H7z" fill="#2f9fe8"/><path d="M10 16h4v5h-4z" fill="#bde"/></svg></div>
    <div class="ap"><svg width="22" height="24" viewBox="0 0 22 24"><path d="M7 7V4a4 4 0 0 1 8 0v3" fill="none" stroke="#fff" stroke-width="1.500"/><path d="M1 6h20v18H1z" fill="#fff"/><g transform="translate(6 10) scale(.5)" fill="#111">${WIN}/></g></svg></div>
    <div class="ap o"><svg width="24" height="24" viewBox="0 0 24 24"><circle cx="12" cy="12" r="11" fill="#ddd"/><path d="M12 12L2.500 6.500A11 11 0 0 1 22 7z" fill="#db4437"/><path d="M12 12L2.500 6.500A11 11 0 0 0 10 23z" fill="#0f9d58"/><path d="M12 12L22 7A11 11 0 0 1 10 23z" fill="#f4c20d"/><circle cx="12" cy="12" r="5.500" fill="#fff"/><circle cx="12" cy="12" r="4.300" fill="#4285f4"/></svg></div>
    <div class="ap"><svg width="18" height="24" viewBox="0 0 18 24"><rect width="18" height="24" fill="#fff"/><rect x="2" y="2" width="14" height="5" fill="#111"/>${[2, 7.5, 12.5].flatMap(x => [10, 14, 18].map(y => `<rect x="${x}" y="${y}" width="3" height="2" fill="#111"/>`)).join('')}</svg></div>
    <div class="ap o"><svg width="26" height="26" viewBox="0 0 26 26"><circle cx="11" cy="11" r="10" fill="#00aff0"/><text x="11" y="17" text-anchor="middle" font-family="Liberation Sans" font-weight="700" font-size="17" fill="#fff">S</text><circle cx="19" cy="19" r="6" fill="#fff" stroke="#7fba00" stroke-width="1.500"/></svg></div>
    <div class="ap o"><svg width="24" height="24" viewBox="0 0 24 24"><path d="M9 2h15v20H9z" fill="#fff"/><path d="M11 6h11M11 10h11M11 14h11M11 18h11" stroke="#2b579a" stroke-width="1.500"/><path d="M0 3l14-2v22L0 21z" fill="#2b579a"/><text x="7" y="16" text-anchor="middle" font-family="Liberation Sans" font-weight="700" font-size="11" fill="#fff">W</text></svg></div>
    <div class="ap o a"><svg width="24" height="24" viewBox="0 0 24 24"><rect width="24" height="24" rx="1" fill="#222" stroke="#555"/><path d="M3 16l3-5 5-1 3-7 2 4 5-3-2 7-5 7-3-3-3 2-2-1z" fill="#eee"/><circle cx="7" cy="13" r="1" fill="#c33"/></svg></div>
   </div>
   <div></div>
   <div class="tr">
     <div class="w"><svg width="12" height="8" viewBox="0 0 12 8"><path d="M1 7l5-5 5 5" fill="none" stroke="#fff" stroke-width="1.200"/></svg></div>
     <div class="w"><svg width="18" height="14" viewBox="0 0 18 14" fill="none" stroke="#fff"><rect x="5.500" y="3.500" width="11" height="9"/><path d="M1 1v3h5V1M3.500 4v3"/></svg></div>
     <div class="w"><svg width="16" height="16" viewBox="0 0 16 16" fill="none" stroke="#ddd"><path d="M1 14A13 13 0 0 1 14 1M4 14A10 10 0 0 1 14 4" stroke-dasharray="2 .7"/><path d="M7 14a7 7 0 0 1 7-7"/><circle cx="12" cy="13" r="1.500" fill="#fff"/></svg></div>
     <div class="w"><svg width="16" height="16" viewBox="0 0 16 16" fill="none" stroke="#fff"><path d="M1 6h3l4-4v12l-4-4H1zM10 5c1 2 1 4 0 6M12 3c2 3 2 7 0 10"/></svg></div>
     <div class="ck">21:13<br>05-02-2017</div>
     <div class="nt"><svg width="16" height="16" viewBox="0 0 16 16"><path d="M0 0h16v12H6l-2 3v-3H0z" fill="#fff"/><path d="M3 3h10M3 6h10M3 9h10" stroke="#444"/></svg><span class="bd">3</span></div>
   </div></div>`)
</script>
</body>
</html>
